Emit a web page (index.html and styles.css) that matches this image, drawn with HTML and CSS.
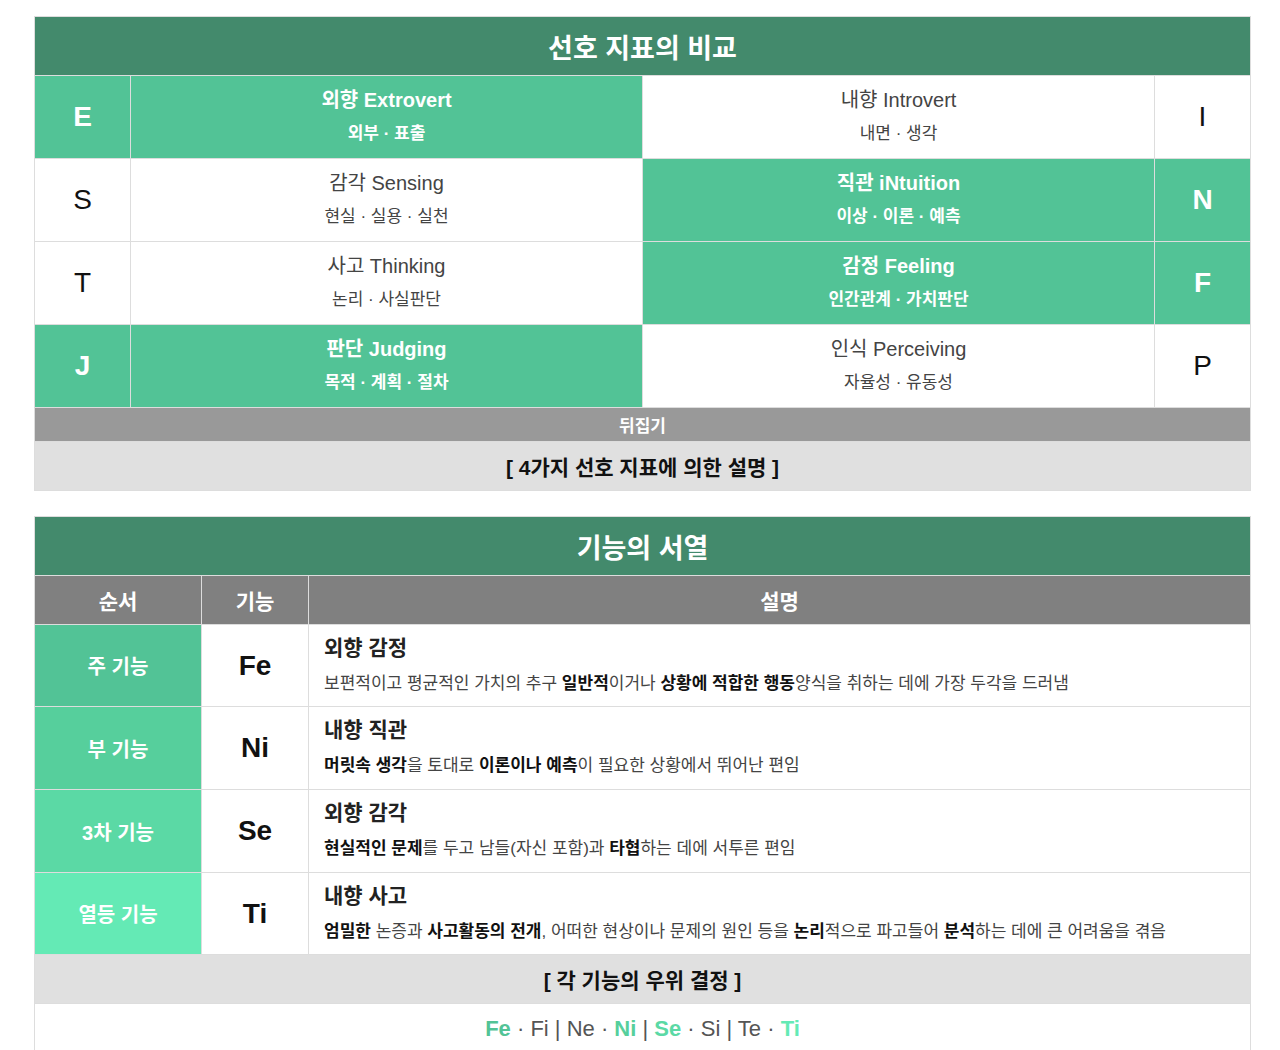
FILE: index.html
```html
<!DOCTYPE html>
<html lang="ko">
<head>
<meta charset="utf-8">
<title>MBTI</title>
<link rel="stylesheet" href="styles.css">
</head>
<body>
<main class="page">
  <table class="tbl tbl-pref">
    <colgroup><col class="c-letter"><col class="c-half"><col class="c-half"><col class="c-letter"></colgroup>
    <tr class="r-title"><th colspan="4" class="title">선호 지표의 비교</th></tr>
    <tr class="r-pref">
      <td class="letter on">E</td>
      <td class="pref on"><div class="main">외향 Extrovert</div><div class="sub">외부 · 표출</div></td>
      <td class="pref"><div class="main">내향 Introvert</div><div class="sub">내면 · 생각</div></td>
      <td class="letter">I</td>
    </tr>
    <tr class="r-pref">
      <td class="letter">S</td>
      <td class="pref"><div class="main">감각 Sensing</div><div class="sub">현실 · 실용 · 실천</div></td>
      <td class="pref on"><div class="main">직관 iNtuition</div><div class="sub">이상 · 이론 · 예측</div></td>
      <td class="letter on">N</td>
    </tr>
    <tr class="r-pref">
      <td class="letter">T</td>
      <td class="pref"><div class="main">사고 Thinking</div><div class="sub">논리 · 사실판단</div></td>
      <td class="pref on"><div class="main">감정 Feeling</div><div class="sub">인간관계 · 가치판단</div></td>
      <td class="letter on">F</td>
    </tr>
    <tr class="r-pref">
      <td class="letter on">J</td>
      <td class="pref on"><div class="main">판단 Judging</div><div class="sub">목적 · 계획 · 절차</div></td>
      <td class="pref"><div class="main">인식 Perceiving</div><div class="sub">자율성 · 유동성</div></td>
      <td class="letter">P</td>
    </tr>
    <tr class="r-flip"><td colspan="4" class="flip">뒤집기</td></tr>
    <tr class="r-note"><td colspan="4" class="note">[ 4가지 선호 지표에 의한 설명 ]</td></tr>
  </table>

  <table class="tbl tbl-func">
    <colgroup><col class="c-order"><col class="c-func"><col class="c-desc"></colgroup>
    <tr class="r-title"><th colspan="3" class="title">기능의 서열</th></tr>
    <tr class="r-head"><th class="head">순서</th><th class="head">기능</th><th class="head">설명</th></tr>
    <tr class="r-func">
      <td class="order o1">주 기능</td>
      <td class="func">Fe</td>
      <td class="desc"><div class="d-title">외향 감정</div><div class="d-text">보편적이고 평균적인 가치의 추구 <b>일반적</b>이거나 <b>상황에 적합한 행동</b>양식을 취하는 데에 가장 두각을 드러냄</div></td>
    </tr>
    <tr class="r-func mid">
      <td class="order o2">부 기능</td>
      <td class="func">Ni</td>
      <td class="desc"><div class="d-title">내향 직관</div><div class="d-text"><b>머릿속 생각</b>을 토대로 <b>이론이나 예측</b>이 필요한 상황에서 뛰어난 편임</div></td>
    </tr>
    <tr class="r-func mid">
      <td class="order o3">3차 기능</td>
      <td class="func">Se</td>
      <td class="desc"><div class="d-title">외향 감각</div><div class="d-text"><b>현실적인 문제</b>를 두고 남들(자신 포함)과 <b>타협</b>하는 데에 서투른 편임</div></td>
    </tr>
    <tr class="r-func">
      <td class="order o4">열등 기능</td>
      <td class="func">Ti</td>
      <td class="desc"><div class="d-title">내향 사고</div><div class="d-text"><b>엄밀한</b> 논증과 <b>사고활동의 전개</b>, 어떠한 현상이나 문제의 원인 등을 <b>논리</b>적으로 파고들어 <b>분석</b>하는 데에 큰 어려움을 겪음</div></td>
    </tr>
    <tr class="r-note2"><td colspan="3" class="note">[ 각 기능의 우위 결정 ]</td></tr>
    <tr class="r-rank"><td colspan="3" class="rank"><span class="k1">Fe</span> · Fi | Ne · <span class="k2">Ni</span> | <span class="k3">Se</span> · Si | Te · <span class="k4">Ti</span></td></tr>
  </table>
</main>
</body>
</html>
```

FILE: styles.css
```css
html, body {
  margin: 0;
  padding: 0;
  background: #ffffff;
}

body {
  font-family: "Liberation Sans", "Noto Sans CJK KR", Arial, sans-serif;
  color: #333333;
}

.page {
  padding: 16px 29px 0 34px;
  display: flex;
  flex-direction: column;
  gap: 25px;
}

.tbl {
  width: 1217px;
  border-collapse: collapse;
  table-layout: fixed;
  border: 1px solid #dddddd;
}

.tbl td, .tbl th {
  border: 1px solid #dddddd;
  padding: 0;
  text-align: center;
  vertical-align: middle;
}

.c-letter { width: 96px; }
.c-half { width: 512px; }
.c-order { width: 167px; }
.c-func { width: 107px; }

.title {
  background: #438a6c;
  color: #ffffff;
  font-size: 27px;
  font-weight: bold;
  height: 58px;
}

.r-pref td { height: 82px; }

.letter {
  font-size: 28px;
  color: #111111;
}

.pref {
  color: #444444;
}

.pref .main {
  font-size: 20px;
  line-height: 34px;
}

.pref .sub {
  font-size: 17px;
  line-height: 34px;
}

.on {
  background: #52c396;
  color: #ffffff;
  font-weight: bold;
}

.flip {
  background: #999999;
  color: #ffffff;
  font-size: 17px;
  font-weight: bold;
  height: 33px;
}

.note {
  background: #e0e0e0;
  color: #111111;
  font-size: 21px;
  font-weight: bold;
  height: 48px;
}

.head {
  background: #808080;
  color: #ffffff;
  font-size: 21px;
  font-weight: bold;
  height: 48px;
}

.r-func td { height: 81px; }
.r-func.mid td { height: 82px; }

.order {
  color: #ffffff;
  font-size: 20px;
  font-weight: bold;
}

.o1 { background: #52c396; }
.o2 { background: #56cf9c; }
.o3 { background: #5bd9a5; }
.o4 { background: #64eab5; }

.func {
  font-size: 28px;
  font-weight: bold;
  color: #111111;
}

.desc {
  text-align: left !important;
  padding: 0 15px !important;
}

.d-title {
  font-size: 21px;
  font-weight: bold;
  color: #222222;
  line-height: 36px;
}

.d-text {
  font-size: 17px;
  color: #444444;
  line-height: 36px;
}

.d-text b {
  color: #111111;
}

.r-note2 .note { height: 48px; }

.rank {
  height: 50px;
  font-size: 22px;
  color: #555555;
}

.k1, .k2, .k3, .k4 { font-weight: bold; }
.k1 { color: #52c396; }
.k2 { color: #56cf9c; }
.k3 { color: #5bd9a5; }
.k4 { color: #64eab5; }
```
